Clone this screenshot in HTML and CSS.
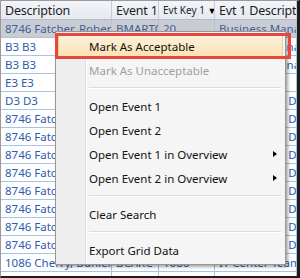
FILE: index.html
```html
<!DOCTYPE html>
<html lang="en">
<head>
    <meta charset="UTF-8">
    <title>Grid Context Menu</title>
    <link rel="stylesheet" href="styles.css">
</head>
<body>
    <div class="frame">
        <!-- Data grid -->
        <div class="grid">
            <div class="row head">
                <div class="cell">Description</div>
                <div class="cell">Event 1</div>
                <div class="cell small">Evt Key 1 <span class="sort">&#9660;</span></div>
                <div class="cell">Evt 1 Description</div>
            </div>
            <div class="row sel">
                <div class="cell">8746 Fatcher, Robert</div>
                <div class="cell">BMARTC</div>
                <div class="cell">20</div>
                <div class="cell">Business Management</div>
            </div>
            <div class="row"><div class="cell">B3 B3</div><div class="cell">BMARTC</div><div class="cell">20</div><div class="cell">Business Management</div></div>
            <div class="row"><div class="cell">B3 B3</div><div class="cell">BMARTC</div><div class="cell">20</div><div class="cell">Business Management</div></div>
            <div class="row"><div class="cell">E3 E3</div><div class="cell"></div><div class="cell"></div><div class="cell"></div></div>
            <div class="row"><div class="cell">D3 D3</div><div class="cell">BDIPIT</div><div class="cell">31</div><div class="cell">Advanced IT Diploma</div></div>
            <div class="row"><div class="cell">8746 Fatcher, Robert</div><div class="cell">BDIPIT</div><div class="cell">31</div><div class="cell">Advanced IT Diploma</div></div>
            <div class="row"><div class="cell">8746 Fatcher, Robert</div><div class="cell">BDIPIT</div><div class="cell">31</div><div class="cell">Advanced IT Diploma</div></div>
            <div class="row"><div class="cell">8746 Fatcher, Robert</div><div class="cell">BDIPIT</div><div class="cell">31</div><div class="cell">Advanced IT Diploma</div></div>
            <div class="row"><div class="cell">8746 Fatcher, Robert</div><div class="cell">BDIPIT</div><div class="cell">31</div><div class="cell">Advanced IT Diploma</div></div>
            <div class="row"><div class="cell">8746 Fatcher, Robert</div><div class="cell">BDIPIT</div><div class="cell">31</div><div class="cell">Advanced IT Diploma</div></div>
            <div class="row"><div class="cell">8746 Fatcher, Robert</div><div class="cell">BDIPIT</div><div class="cell">31</div><div class="cell">Advanced IT Diploma</div></div>
            <div class="row"><div class="cell">8746 Fatcher, Robert</div><div class="cell">BDIPIT</div><div class="cell">31</div><div class="cell">Advanced IT Diploma</div></div>
            <div class="row"><div class="cell">8746 Fatcher, Robert</div><div class="cell">BDIPIT</div><div class="cell">31</div><div class="cell">Advanced IT Diploma</div></div>
            <div class="row"><div class="cell">1086 Cherry, Daniel</div><div class="cell">BCARC</div><div class="cell">1086</div><div class="cell">IT Center Team</div></div>
            <div class="row"><div class="cell">8746 Fatcher, Robert</div><div class="cell">BMARTC</div><div class="cell">1477</div><div class="cell">Internal Audit</div></div>
        </div>

        <!-- Context menu -->
        <div class="menu">
            <div class="item hot">Mark As Acceptable</div>
            <div class="item off">Mark As Unacceptable</div>
            <div class="sep"></div>
            <div class="item">Open Event 1</div>
            <div class="item">Open Event 2</div>
            <div class="item">Open Event 1 in Overview <span class="arrow"></span></div>
            <div class="item">Open Event 2 in Overview <span class="arrow"></span></div>
            <div class="sep"></div>
            <div class="item">Clear Search</div>
            <div class="sep"></div>
            <div class="item">Export Grid Data</div>
        </div>

        <!-- Red callout round the first item -->
        <div class="callout"></div>
    </div>
</body>
</html>
```

FILE: styles.css
```css
/* Base */
* {
    margin: 0;
    padding: 0;
    box-sizing: border-box;
}

body {
    font-family: 'Noto Sans', 'Open Sans', sans-serif;
    font-size: 11.5px;
    background: #fff;
}

/* Screenshot frame */
.frame {
    position: relative;
    width: 300px;
    height: 278px;
    overflow: hidden;
    border-left: 1px solid #9a9a9a;
    border-top: 1px solid #9a9a9a;
    border-right: 3px solid #1c1c1c;
    border-bottom: 2px solid #1c1c1c;
    background: #fff;
}

/* Grid */
.grid {
    display: flex;
    flex-direction: column;
}

.row {
    display: grid;
    grid-template-columns: 111px 47px 56px 1fr;
    height: 18px;
    border-bottom: 1px solid #a9c3e6;
    color: #2d5bab;
}

.cell {
    padding-left: 4px;
    white-space: nowrap;
    overflow: hidden;
    line-height: 17px;
    border-right: 1px solid #a9c3e6;
}

.row.head {
    height: 19px;
    color: #1e1e1e;
    font-size: 12.5px;
    letter-spacing: -0.2px;
    background: linear-gradient(#f3f5f9, #e4e9f0);
    border-bottom: 1px solid #b6bcc6;
}

.row.head .cell {
    line-height: 19px;
    border-right: 1px solid #c9ced6;
}

.row.head .small {
    font-size: 10px;
    letter-spacing: 0;
}

.sort {
    font-size: 9px;
    color: #000;
}

.row.sel {
    background: #c9cdd3;
    color: #3f5f9c;
    border-bottom: 1px solid #b9c0ca;
}

.row.sel .cell {
    border-right: 1px solid #b9c0ca;
}

/* Context menu */
.menu {
    position: absolute;
    left: 54px;
    top: 30px;
    width: 231px;
    padding: 2px;
    border: 1px solid #979797;
    background: linear-gradient(to right, #eeeeee 29px, #e0e0e0 29px, #e0e0e0 30px, #ffffff 30px, #ffffff 31px, #f5f5f5 31px);
    box-shadow: 2px 2px 3px rgba(0, 0, 0, 0.35);
    color: #111;
    font-size: 11.5px;
}

.item {
    display: flex;
    align-items: center;
    justify-content: space-between;
    height: 24px;
    padding-left: 31px;
    padding-right: 6px;
}

.item.hot {
    background: linear-gradient(#fdf2dc, #fbe1b3);
    border: 1px solid #efcf92;
    border-radius: 2px;
    padding-left: 30px;
}

.item.off {
    color: #a0a0a0;
}

.arrow {
    width: 0;
    height: 0;
    border-left: 4px solid #000;
    border-top: 3.5px solid transparent;
    border-bottom: 3.5px solid transparent;
}

.sep {
    height: 12px;
    margin-left: 31px;
    margin-right: 2px;
    display: flex;
    flex-direction: column;
    justify-content: center;
}

.sep::before {
    content: "";
    display: block;
    height: 1px;
    background: #dcdcdc;
    border-bottom: 1px solid #fff;
    box-sizing: content-box;
}

/* Annotation box */
.callout {
    position: absolute;
    left: 54px;
    top: 32px;
    width: 236px;
    height: 26px;
    border: 3px solid #e8473d;
}
```
